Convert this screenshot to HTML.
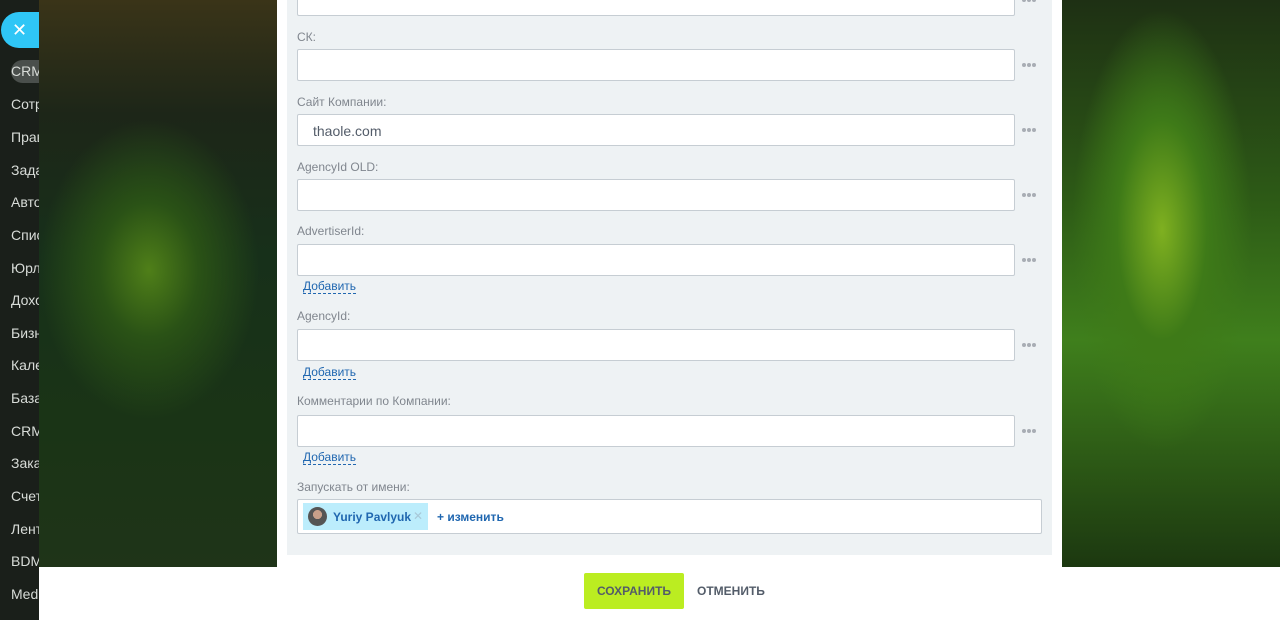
<!DOCTYPE html>
<html><head><meta charset="utf-8"><style>
*{box-sizing:border-box;margin:0;padding:0}
body{width:1280px;height:620px;overflow:hidden;position:relative;background:#fff;font-family:"Liberation Sans","DejaVu Sans",sans-serif}
.bgl{position:absolute;left:39px;top:0;width:238px;height:567px;background:radial-gradient(ellipse 110px 150px at 110px 270px,#4f7f18 0%,#2a5216 45%,transparent 100%),linear-gradient(180deg,#3a3418 0%,#1d2618 20%,#17301a 45%,#1a3416 75%,#1f3418 100%)}
.bgr{position:absolute;left:1062px;top:0;width:218px;height:567px;background:radial-gradient(ellipse 90px 220px at 100px 230px,#7fb020 0%,#3e7a18 50%,transparent 100%),linear-gradient(180deg,#1e3014 0%,#2d5a16 35%,#3f7f1c 60%,#1c3810 100%)}
.side{position:absolute;left:0;top:0;width:39px;height:620px;background:#1a1f1a}
.side div{position:absolute;left:11px;color:#d8dcd8;font-size:14px;white-space:nowrap;width:28px;overflow:hidden}
.close{position:absolute;left:1px;top:12px;width:38px;height:36px;background:#2fc6f6;border-radius:18px 0 0 18px;color:#fff;font-size:18px;line-height:36px;padding-left:11px}
.crm{position:absolute;left:2px;top:60px;width:37px;height:23px;background:#4a4f4c;border-radius:12px 0 0 12px}
.modal{position:absolute;left:277px;top:0;width:785px;height:620px;background:#fff}
.panel{position:absolute;left:10px;top:0;width:765px;height:555px;background:#eef2f4}
.lbl{position:absolute;left:10px;font-size:12px;color:#80868e}
.inp{position:absolute;left:10px;width:718px;height:32px;background:#fff;border:1px solid #c6cdd3;border-radius:2px;font-size:14px;color:#535c69;padding:8px 15px}
.dots{position:absolute;left:735px;width:24px;font-size:0;white-space:nowrap}
.dots i{display:inline-block;width:4px;height:4px;border-radius:2px;background:#a8adb4;margin-right:1px}
.add{position:absolute;left:16px;font-size:12px;color:#2067b0;border-bottom:1px dashed #2067b0;line-height:13px}
.btn{position:absolute;left:307px;top:573px;width:100px;height:36px;background:#bbed21;border-radius:2px;font-size:12px;font-weight:bold;color:#535c69;text-align:center;line-height:36px}
.cancel{position:absolute;left:420px;top:573px;line-height:36px;font-size:12px;font-weight:bold;color:#535c69}
</style></head><body>
<div class="bgl"></div><div class="bgr"></div>
<div class="side">
<div class="crm"></div>
<div style="top:63px">CRM</div><div style="top:96px">Сотрудники</div><div style="top:129px">Права</div><div style="top:162px">Задачи</div><div style="top:194px">Автоматизация</div><div style="top:227px">Списки</div><div style="top:260px">Юрлица</div><div style="top:292px">Доходы</div><div style="top:325px">Бизнес</div><div style="top:357px">Календарь</div><div style="top:390px">База</div><div style="top:423px">CRM</div><div style="top:455px">Заказы</div><div style="top:488px">Счета</div><div style="top:521px">Лента</div><div style="top:553px">BDM</div><div style="top:586px">Media</div>
</div>
<div class="close">✕</div>
<div class="modal"><div class="panel">
<div class="inp" style="top:-16px"></div><div class="dots" style="top:-2px"><i></i><i></i><i></i></div>
<div class="lbl" style="top:30px">СК:</div>
<div class="inp" style="top:49px"></div><div class="dots" style="top:63px"><i></i><i></i><i></i></div>
<div class="lbl" style="top:95px">Сайт Компании:</div>
<div class="inp" style="top:114px">thaole.com</div><div class="dots" style="top:128px"><i></i><i></i><i></i></div>
<div class="lbl" style="top:160px">AgencyId OLD:</div>
<div class="inp" style="top:179px"></div><div class="dots" style="top:193px"><i></i><i></i><i></i></div>
<div class="lbl" style="top:224px">AdvertiserId:</div>
<div class="inp" style="top:244px"></div><div class="dots" style="top:258px"><i></i><i></i><i></i></div>
<div class="add" style="top:280px">Добавить</div>
<div class="lbl" style="top:309px">AgencyId:</div>
<div class="inp" style="top:329px"></div><div class="dots" style="top:343px"><i></i><i></i><i></i></div>
<div class="add" style="top:366px">Добавить</div>
<div class="lbl" style="top:394px">Комментарии по Компании:</div>
<div class="inp" style="top:415px"></div><div class="dots" style="top:429px"><i></i><i></i><i></i></div>
<div class="add" style="top:451px">Добавить</div>
<div class="lbl" style="top:480px">Запускать от имени:</div>
<div style="position:absolute;left:10px;top:499px;width:745px;height:35px;background:#fff;border:1px solid #c6cdd3;border-radius:2px">
<div style="position:absolute;left:5px;top:3px;width:125px;height:27px;background:#bcedfc"></div>
<div style="position:absolute;left:10px;top:7px;width:19px;height:19px;border-radius:50%;background:radial-gradient(circle at 50% 40%,#c9a08a 0 30%,#555 31%)"></div>
<div style="position:absolute;left:35px;top:10px;font-size:12px;font-weight:bold;color:#2067b0">Yuriy Pavlyuk</div>
<div style="position:absolute;left:115px;top:9px;font-size:12px;color:#a8c8d8">✕</div>
<div style="position:absolute;left:139px;top:10px;font-size:12px;font-weight:bold;color:#2067b0">+ изменить</div>
</div>
</div>
<div class="btn">СОХРАНИТЬ</div><div class="cancel">ОТМЕНИТЬ</div>
</div>
</body></html>
